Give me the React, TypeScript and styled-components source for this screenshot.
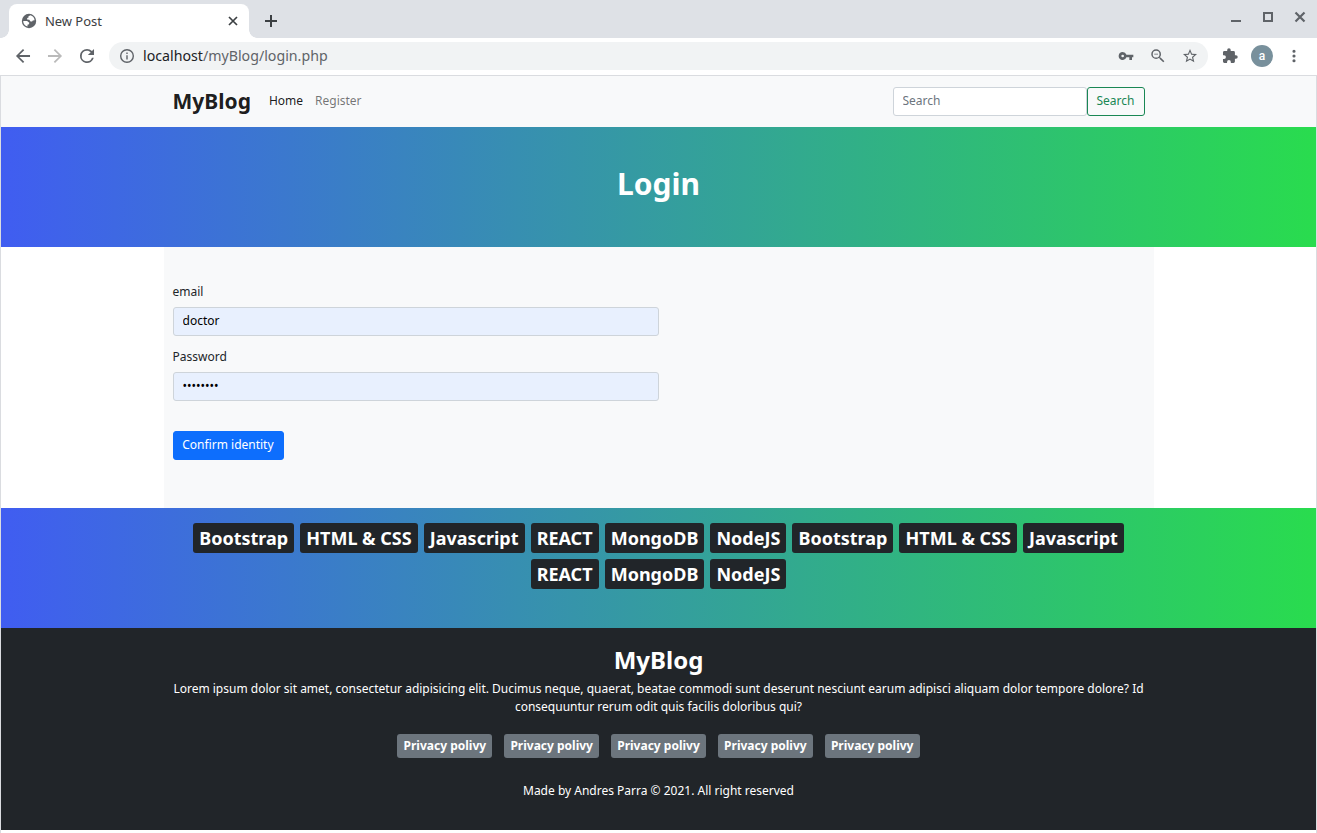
import React from "react";
import styled, { createGlobalStyle } from "styled-components";

const Global = createGlobalStyle`
  *, *::before, *::after { box-sizing: border-box; }
  html, body { margin: 0; padding: 0; background: #fff; }
  body { font-family: "Noto Sans", sans-serif; font-size: 12px; line-height: 1.5; color: #212529; }
  h1, h2, p { margin: 0; }
  input, button { font-family: inherit; }
`;

const Window = styled.div`
  width: 1317px;
  height: 833px;
  display: flex;
  flex-direction: column;
  overflow: hidden;
  background: #fff;
`;

const TabStrip = styled.div`
  height: 38px;
  flex: none;
  display: flex;
  align-items: flex-start;
  background: #dee1e6;
  padding: 4px 11px 0 9px;
`;

const Tab = styled.div`
  position: relative;
  width: 240px;
  height: 34px;
  flex: none;
  display: flex;
  align-items: center;
  padding: 0 9px 0 12px;
  background: #fff;
  border-radius: 8px 8px 0 0;
  color: #3c4043;
  font-size: 13px;
  &::before, &::after {
    content: "";
    position: absolute;
    bottom: 0;
    width: 8px;
    height: 8px;
  }
  &::before { left: -8px; background: radial-gradient(circle at 0 0, transparent 7.5px, #fff 8px); }
  &::after { right: -8px; background: radial-gradient(circle at 100% 0, transparent 7.5px, #fff 8px); }
`;

const TabTitle = styled.span`
  flex: 1;
  margin-left: 8px;
  line-height: 18px;
  letter-spacing: -0.05px;
`;

const NewTab = styled.div`
  width: 28px;
  height: 34px;
  margin-left: 8px;
  display: flex;
  align-items: center;
  justify-content: center;
`;

const WindowControls = styled.div`
  margin-left: auto;
  height: 26px;
  display: flex;
  align-items: center;
  gap: 20px;
`;

const Toolbar = styled.div`
  height: 38px;
  flex: none;
  display: flex;
  align-items: center;
  background: #fff;
  border-bottom: 1px solid #dadce0;
  padding: 0 7px 1px;
`;

const IconSlot = styled.div`
  width: 32px;
  height: 28px;
  flex: none;
  display: flex;
  align-items: center;
  justify-content: center;
`;

const AddressBar = styled.div`
  width: 1099px;
  height: 28px;
  flex: none;
  display: flex;
  align-items: center;
  margin: 0 6px;
  padding: 0 2px;
  border-radius: 14px;
  background: #f1f3f4;
`;

const Url = styled.span`
  flex: 1;
  font-size: 14.2px;
  line-height: 20px;
  color: #5f6368;
  padding-bottom: 1px;
  b { font-weight: 400; color: #202124; }
`;

const Avatar = styled.div`
  width: 22px;
  height: 22px;
  border-radius: 50%;
  background: #78909c;
  color: #fff;
  text-align: center;
  font: 500 12px/22px Roboto, sans-serif;
`;

const Glyph = styled.svg`
  display: block;
  flex: none;
`;

const Viewport = styled.main`
  flex: none;
  height: 754px;
  display: flex;
  flex-direction: column;
  border: solid #dadce0;
  border-width: 0 1px;
`;

const WindowEdge = styled.div`
  flex: 1;
  border: solid #dadce0;
  border-width: 0 1px;
`;

const Navbar = styled.nav`
  height: 51px;
  flex: none;
  background: #f8f9fa;
`;

const Container = styled.div`
  width: 990px;
  margin: 0 auto;
  padding: 0 9px;
`;

const NavRow = styled(Container)`
  height: 100%;
  display: flex;
  align-items: center;
`;

const Brand = styled.span`
  color: rgba(0, 0, 0, 0.9);
  font-size: 21px;
  font-weight: 700;
  margin-right: 12px;
`;

const NavLink = styled.a<{ $active?: boolean }>`
  padding: 5px 6px 7px;
  color: ${(p) => (p.$active ? "rgba(0,0,0,.9)" : "rgba(0,0,0,.55)")};
`;

const SearchForm = styled.form`
  display: flex;
  margin-left: auto;
`;

const Input = styled.input<{ $filled?: boolean }>`
  display: block;
  width: ${(p) => (p.$filled ? "486px" : "194px")};
  height: 29px;
  padding: 3px 9px 6px;
  border: 1px solid #ced4da;
  border-radius: 3px;
  background: ${(p) => (p.$filled ? "#e8f0fe" : "#fff")};
  color: #000;
  font-size: 12px;
  line-height: 18px;
  outline: 0;
  &::placeholder { color: #6c757d; }
`;

const Button = styled.button<{ $primary?: boolean }>`
  height: 29px;
  padding: ${(p) => (p.$primary ? "4px 9.25px 5px 8.75px" : "4px 9px 5px")};
  border: 1px solid ${(p) => (p.$primary ? "#0d6efd" : "#198754")};
  border-radius: 3px;
  background: ${(p) => (p.$primary ? "#0d6efd" : "transparent")};
  color: ${(p) => (p.$primary ? "#fff" : "#198754")};
  font-size: 12px;
  line-height: 18px;
`;

const Band = styled.section`
  height: 120px;
  flex: none;
  background: linear-gradient(to right, #405df1, #29dc4e);
`;

const Heading = styled.h1`
  padding-top: 39px;
  text-align: center;
  color: #fff;
  font-size: 30px;
  line-height: 36px;
  font-weight: 700;
`;

const FormPanel = styled(Container)`
  height: 261px;
  flex: none;
  background: #f8f9fa;
  padding-top: 36px;
`;

const Field = styled.label`
  display: flex;
  flex-direction: column;
  gap: 6px;
  margin-bottom: 12px;
`;

const Submit = styled.div`
  padding-top: 18px;
`;

const TagList = styled(Container)`
  display: flex;
  flex-wrap: wrap;
  justify-content: center;
  gap: 6px;
  padding-top: 15px;
`;

const Tag = styled.span`
  height: 30px;
  padding: 6px 6.06px;
  border-radius: 3px;
  background: #212529;
  color: #fff;
  font-size: 18px;
  line-height: 18px;
  font-weight: 700;
`;

const Footer = styled.footer`
  height: 202px;
  flex: none;
  background: #212529;
  color: #fff;
  text-align: center;
`;

const FooterTitle = styled.h2`
  padding-top: 17px;
  font-size: 24px;
  line-height: 29px;
  font-weight: 700;
  margin-bottom: 6px;
`;

const Links = styled.div`
  display: flex;
  justify-content: center;
  gap: 12.1px;
  margin: 18px 0 24px;
`;

const LinkBadge = styled.a`
  height: 24px;
  padding: 6px 6.1px;
  border-radius: 3px;
  background: #6c757d;
  color: #fff;
  font-size: 12px;
  line-height: 12px;
  font-weight: 700;
`;

const Icon = ({
  d,
  size = 20,
  color = "#5f6368",
  box = "0.6 0.6 22.8 22.8",
}: {
  d: string;
  size?: number;
  color?: string;
  box?: string;
}) => (
  <IconSlot>
    <Glyph width={size} height={size} viewBox={box} fill={color}>
      <path d={d} />
    </Glyph>
  </IconSlot>
);

const paths = {
  back: "M20 11H7.83l5.59-5.59L12 4l-8 8 8 8 1.41-1.41L7.83 13H20v-2z",
  forward: "M12 4l-1.41 1.41L16.17 11H4v2h12.17l-5.58 5.59L12 20l8-8z",
  reload:
    "M17.65 6.35A7.96 7.96 0 0 0 12 4a8 8 0 1 0 7.73 10h-2.08A6 6 0 1 1 12 6c1.66 0 3.14.69 4.22 1.78L13 11h7V4l-2.35 2.35z",
  info: "M11 7h2v2h-2V7zm0 4h2v6h-2v-6zm1-9a10 10 0 1 0 0 20 10 10 0 0 0 0-20zm0 18a8 8 0 1 1 0-16 8 8 0 0 1 0 16z",
  key: "M12.65 10A5.99 5.99 0 0 0 7 6a6 6 0 1 0 5.65 8H17v4h4v-4h2v-4H12.65zM7 14a2 2 0 1 1 0-4 2 2 0 0 1 0 4z",
  zoomOut:
    "M15.5 14h-.79l-.28-.27A6.47 6.47 0 0 0 16 9.5 6.5 6.5 0 1 0 9.5 16c1.61 0 3.09-.59 4.23-1.57l.27.28v.79l5 4.99L20.49 19l-4.99-5zm-6 0a4.5 4.5 0 1 1 0-9 4.5 4.5 0 0 1 0 9zM7 9h5v1H7z",
  star: "M22 9.24l-7.19-.62L12 2 9.19 8.63 2 9.24l5.46 4.73L5.82 21 12 17.27 18.18 21l-1.63-7.03L22 9.24zM12 15.4l-3.76 2.27 1-4.28-3.32-2.88 4.38-.38L12 6.1l1.71 4.04 4.38.38-3.32 2.88 1 4.28L12 15.4z",
  puzzle:
    "M20.5 11H19V7a2 2 0 0 0-2-2h-4V3.5a2.5 2.5 0 0 0-5 0V5H4a2 2 0 0 0-1.99 2v3.8H3.5a2.7 2.7 0 0 1 0 5.4H2V20a2 2 0 0 0 2 2h3.8v-1.5a2.7 2.7 0 0 1 5.4 0V22H17a2 2 0 0 0 2-2v-4h1.5a2.5 2.5 0 0 0 0-5z",
  more: "M12 8a2 2 0 1 0 0-4 2 2 0 0 0 0 4zm0 2a2 2 0 1 0 0 4 2 2 0 0 0 0-4zm0 6a2 2 0 1 0 0 4 2 2 0 0 0 0-4z",
};

const GlobeIcon = () => (
  <Glyph width="16" height="16" viewBox="0 0 16 16">
    <circle cx="8" cy="8" r="7.2" fill="#5f6368" />
    <path
      d="M9.3 2.2 7.3 3.5 7.6 4.6 6.2 5.1 6.1 6.6 8.3 6.7 9.5 8.4 11.1 8.5 11.8 7.4 13.6 7.3A5.7 5.7 0 0 0 9.3 2.2zM2.2 8.1h3.9l2.2 1.7-.3 1.5-1.5.5v1.8A5.8 5.8 0 0 1 2.2 8.1z"
      fill="#fff"
    />
  </Glyph>
);

const CloseIcon = () => (
  <Glyph width="14" height="14" viewBox="0 0 14 14" stroke="#3c4043" strokeWidth="1.7">
    <path d="M3 3l8 8M11 3l-8 8" />
  </Glyph>
);

const tags = ["Bootstrap", "HTML & CSS", "Javascript", "REACT", "MongoDB", "NodeJS"];

export default function App() {
  return (
    <Window>
      <Global />
      <TabStrip>
        <Tab>
          <GlobeIcon />
          <TabTitle>New Post</TabTitle>
          <CloseIcon />
        </Tab>
        <NewTab>
          <Glyph width="14" height="14" viewBox="0 0 14 14" stroke="#3c4043" strokeWidth="2">
            <path d="M7 1v12M1 7h12" />
          </Glyph>
        </NewTab>
        <WindowControls>
          <Glyph width="12" height="12" viewBox="0 0 12 12">
            <path d="M1 9h10v2H1z" fill="#5f6368" />
          </Glyph>
          <Glyph width="12" height="12" viewBox="0 0 12 12" fill="none" stroke="#5f6368" strokeWidth="2">
            <path d="M2 2h8v8H2z" />
          </Glyph>
          <Glyph width="12" height="12" viewBox="0 0 12 12" stroke="#5f6368" strokeWidth="2.2">
            <path d="M1.5 1.5l9 9M10.5 1.5l-9 9" />
          </Glyph>
        </WindowControls>
      </TabStrip>
      <Toolbar>
        <Icon d={paths.back} />
        <Icon d={paths.forward} color="#bababa" />
        <Icon d={paths.reload} />
        <AddressBar>
          <Icon d={paths.info} size={16} />
          <Url>
            <b>localhost</b>/myBlog/login.php
          </Url>
          <Icon d={paths.key} size={16} box="0 0 24 24" />
          <Icon d={paths.zoomOut} size={18} box="0 0 24 24" />
          <Icon d={paths.star} size={16} />
        </AddressBar>
        <Icon d={paths.puzzle} size={16} />
        <IconSlot>
          <Avatar>a</Avatar>
        </IconSlot>
        <Icon d={paths.more} size={18} />
      </Toolbar>
      <Viewport>
        <Navbar>
          <NavRow>
            <Brand>MyBlog</Brand>
            <NavLink $active>Home</NavLink>
            <NavLink>Register</NavLink>
            <SearchForm>
              <Input placeholder="Search" />
              <Button type="button">Search</Button>
            </SearchForm>
          </NavRow>
        </Navbar>
        <Band>
          <Heading>Login</Heading>
        </Band>
        <FormPanel>
          <Field>
            email
            <Input $filled defaultValue="doctor" />
          </Field>
          <Field>
            Password
            <Input $filled type="password" defaultValue="password" />
          </Field>
          <Submit>
            <Button type="button" $primary>
              Confirm identity
            </Button>
          </Submit>
        </FormPanel>
        <Band>
          <TagList>
            {[...tags, ...tags].map((tag, i) => (
              <Tag key={i}>{tag}</Tag>
            ))}
          </TagList>
        </Band>
        <Footer>
          <Container>
            <FooterTitle>MyBlog</FooterTitle>
            <p>
              Lorem ipsum dolor sit amet, consectetur adipisicing elit. Ducimus neque, quaerat, beatae commodi sunt
              deserunt nesciunt earum adipisci aliquam dolor tempore dolore? Id consequuntur rerum odit quis facilis
              doloribus qui?
            </p>
            <Links>
              {Array.from({ length: 5 }, (_, i) => (
                <LinkBadge key={i}>Privacy polivy</LinkBadge>
              ))}
            </Links>
            <p>Made by Andres Parra © 2021. All right reserved</p>
          </Container>
        </Footer>
      </Viewport>
      <WindowEdge />
    </Window>
  );
}
